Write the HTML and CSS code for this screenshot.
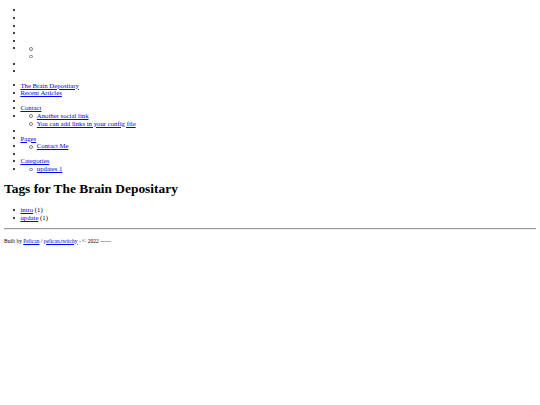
FILE: index.html
```html
<!DOCTYPE html>
<html lang="en">
<head>
<meta charset="utf-8">
<title>Tags for The Brain Depositary</title>
<link rel="stylesheet" href="styles.css">
</head>
<body>
<ul class="list">
  <li></li>
  <li></li>
  <li></li>
  <li></li>
  <li></li>
  <li><ul class="sub"><li></li><li></li></ul></li>
  <li></li>
  <li></li>
</ul>
<ul class="list">
  <li><a href="#">The Brain Depositary</a></li>
  <li><a href="#">Recent Articles</a></li>
  <li></li>
  <li><a href="#">Contact</a></li>
  <li><ul class="sub"><li><a href="#">Another social link</a></li><li><a href="#">You can add links in your config file</a></li></ul></li>
  <li></li>
  <li><a href="#">Pages</a></li>
  <li><ul class="sub"><li><a href="#">Contact Me</a></li></ul></li>
  <li></li>
  <li><a href="#">Categories</a></li>
  <li><ul class="sub"><li><a href="#">updates 1</a></li></ul></li>
</ul>
<h1 class="title">Tags for The Brain Depositary</h1>
<ul class="list">
  <li><a href="#">intro</a> (1)</li>
  <li><a href="#">update</a> (1)</li>
</ul>
<hr class="rule">
<footer class="footer">
  <p>Built by <a href="#">Pelican</a> / <a href="#">pelican.twitchy</a> - &copy; 2022 ——</p>
</footer>
</body>
</html>
```
FILE: styles.css
```css
body {
  margin: 0 4px 4px;
  font-family: "Liberation Serif", "Times New Roman", serif;
  font-size: 6.75px;
  line-height: 7.6px;
  color: #000;
  background: #fff;
}
a {
  color: #0000ee;
}
.list {
  margin: 6.6px 0;
  padding-left: 16.4px;
  list-style: none;
}
.list li {
  position: relative;
  min-height: 7.6px;
}
.list > li::before {
  content: "";
  position: absolute;
  left: -7px;
  top: 2.8px;
  width: 2px;
  height: 2px;
  border-radius: 50%;
  background: #000;
}
.sub {
  margin: 0;
  padding-left: 16.4px;
  list-style: none;
}
.list .sub > li::before {
  content: "";
  position: absolute;
  left: -7.3px;
  top: 2.5px;
  width: 1.8px;
  height: 1.8px;
  border: 0.5px solid #777;
  border-radius: 50%;
  background: transparent;
}
.title {
  font-size: 13.4px;
  line-height: 15.2px;
  margin: 8.8px 0 9.8px;
}
.rule {
  margin: 3.3px 0;
  border: 0;
  border-top: 1px solid #9a9a9a;
  border-bottom: 1px solid #eeeeee;
  height: 0;
}
.footer {
  font-size: 5.5px;
  line-height: 6.1px;
}
.footer p {
  margin: 7.3px 0;
}
```
